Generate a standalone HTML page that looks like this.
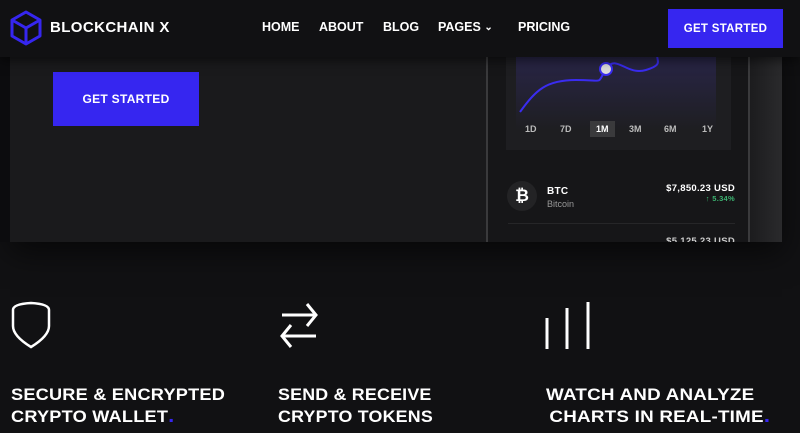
<!DOCTYPE html>
<html><head><meta charset="utf-8"><style>
*{margin:0;padding:0;box-sizing:border-box}
body{width:800px;height:433px;overflow:hidden;background:#111113;font-family:"Liberation Sans",sans-serif;color:#fff;position:relative}
.b{font-weight:700;letter-spacing:0.3px}
.abs{position:absolute}
header{position:absolute;left:0;top:0;width:800px;height:57px;background:#111113;z-index:5;box-shadow:0 4px 10px rgba(0,0,0,.5)}
.nav{font-size:12.5px;font-weight:700;top:20px}
.btn{background:#3626f0;color:#fff;font-weight:700;font-size:11.5px;display:flex;align-items:center;justify-content:center;letter-spacing:.3px}
.hero{left:10px;top:40px;width:772px;height:202px;background:#1a1a1c;box-shadow:0 10px 30px rgba(0,0,0,.6)}
.ft{font-size:16.5px;font-weight:700;line-height:22px;letter-spacing:.2px;transform-origin:0 0;white-space:nowrap}
.dot{color:#3626f0;font-size:20px;line-height:10px}
</style></head><body>
<div class="hero abs"></div>
<div class="abs" style="left:0;top:40px;width:10px;height:202px;background:#0c0c0e"></div>
<div class="abs btn" style="left:53px;top:72px;width:146px;height:54px;font-size:12px">GET STARTED</div>
<div class="abs" style="left:486px;top:40px;width:264px;height:202px;background:#161618;border-left:2px solid #3a3a3c;border-right:2px solid #3a3a3c"></div>
<div class="abs" style="left:750px;top:40px;width:32px;height:202px;background:linear-gradient(90deg,#1c1c1e,#2a2a2c)"></div>
<div class="abs" style="left:506px;top:40px;width:225px;height:110px;background:#1e1e21"></div>
<svg class="abs" style="left:506px;top:40px" width="225" height="90">
<defs><linearGradient id="g" x1="0" y1="0" x2="0" y2="1"><stop offset="0" stop-color="#2b2750"/><stop offset="1" stop-color="#1e1e21"/></linearGradient></defs>
<rect x="10" y="17" width="200" height="73" fill="url(#g)" opacity=".8"/>
<path d="M14 72 C30 50,40 40,70 40 S90 45,100 29 S120 36,140 30 S148 20,152 12" stroke="#3a2cf0" stroke-width="2" fill="none"/>
<circle cx="100" cy="29" r="6" fill="#ddd" stroke="#3a2cf0" stroke-width="2"/>
</svg>
<div class="abs" style="left:525px;top:124px;font-size:9px;color:#bbb;font-weight:700;width:200px">
<span class="abs" style="left:0">1D</span><span class="abs" style="left:35px">7D</span>
<span class="abs" style="left:65px;top:-3px;background:#3a3a3c;padding:3px 6px;color:#fff">1M</span>
<span class="abs" style="left:104px">3M</span><span class="abs" style="left:139px">6M</span><span class="abs" style="left:177px">1Y</span></div>
<div class="abs" style="left:507px;top:181px;width:30px;height:30px;border-radius:50%;background:#232325;display:flex;align-items:center;justify-content:center;font-weight:700;font-size:17px">₿</div>
<div class="abs b" style="left:547px;top:186px;font-size:10px">BTC</div>
<div class="abs" style="left:547px;top:199px;font-size:9px;color:#999">Bitcoin</div>
<div class="abs b" style="left:600px;width:135px;text-align:right;top:183px;font-size:9.5px">$7,850.23 USD</div>
<div class="abs b" style="left:600px;width:135px;text-align:right;top:194px;font-size:7.5px;color:#3cb371">↑ 5.34%</div>
<div class="abs" style="left:508px;top:223px;width:227px;height:1px;background:#262628"></div>
<div class="abs b" style="left:600px;width:135px;text-align:right;top:236px;font-size:9.5px;color:#ccc;height:6px;overflow:hidden;line-height:12px">$5,125.23 USD</div>
<header>
<svg class="abs" style="left:10px;top:10px" width="32" height="36" viewBox="0 0 32 36"><path d="M16 2 L30 10 L30 26 L16 34 L2 26 L2 10 Z M2 10 L16 18 L30 10 M16 18 L16 34" stroke="#3626f0" stroke-width="3" fill="none" stroke-linejoin="round"/></svg>
<div class="abs b" style="left:50px;top:19px;font-size:15px;letter-spacing:.4px">BLOCKCHAIN X</div>
<div class="abs nav" style="left:262px">HOME</div>
<div class="abs nav" style="left:319px">ABOUT</div>
<div class="abs nav" style="left:383px">BLOG</div>
<div class="abs nav" style="left:438px">PAGES <span style="font-size:10px;position:relative;top:-1px">&#8964;</span></div>
<div class="abs nav" style="left:518px">PRICING</div>
<div class="abs btn" style="left:668px;top:9px;width:115px;height:39px">GET STARTED</div>
</header>
<svg class="abs" style="left:10px;top:300px" width="44" height="50"><path d="M3 10 Q3 4,21 3 Q39 4,39 10 L39 26 Q39 36,21 47 Q3 36,3 26 Z" stroke="#fff" stroke-width="2.5" fill="none"/></svg>
<svg class="abs" style="left:276px;top:300px" width="46" height="52"><path d="M6 15 H40 M31 4 L40 15 L31 26 M40 36 H6 M15 25 L6 36 L15 47" stroke="#fff" stroke-width="3" fill="none"/></svg>
<svg class="abs" style="left:544px;top:302px" width="50" height="48"><path d="M3 16 V47 M23 6 V47 M44 0 V47" stroke="#fff" stroke-width="3"/></svg>
<div class="abs ft" style="left:11px;top:384px;transform:scaleX(1.1)">SECURE &amp; ENCRYPTED<br>CRYPTO WALLET<span class="dot">.</span></div>
<div class="abs ft" style="left:278px;top:384px;transform:scaleX(1.08)">SEND &amp; RECEIVE<br>CRYPTO TOKENS</div>
<div class="abs ft" style="left:546px;top:384px;transform:scaleX(1.14)">WATCH AND ANALYZE<br><span style="margin-left:3px">CHARTS IN REAL-TIME</span><span class="dot">.</span></div>
</body></html>
